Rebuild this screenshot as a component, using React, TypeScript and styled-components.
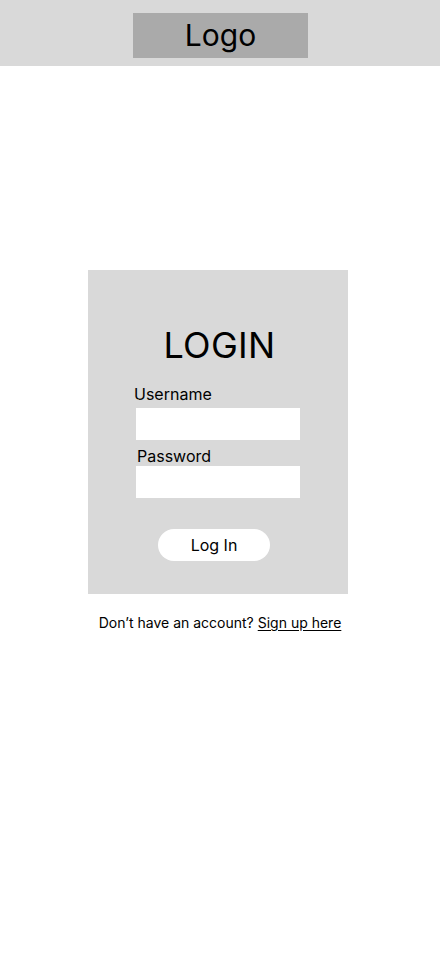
import React from "react";
import styled, { createGlobalStyle } from "styled-components";

const Global = createGlobalStyle`
  html, body { margin: 0; padding: 0; background: #ffffff; }
  body { font-family: Inter, "Noto Sans", sans-serif; color: #000; }
  * { box-sizing: border-box; }
`;

const Page = styled.div`
  display: flex;
  flex-direction: column;
  min-height: 956px;
  background: #ffffff;
`;

const Header = styled.header`
  height: 66px;
  background: #d9d9d9;
  display: flex;
  align-items: flex-start;
  justify-content: center;
  padding-top: 13px;
  padding-left: 1px;
`;

const LogoBox = styled.div`
  width: 175px;
  height: 45px;
  background: #aaaaaa;
  display: flex;
  align-items: center;
  justify-content: center;
  font-size: 30px;
  font-weight: 400;
  line-height: 1;
  padding-bottom: 1px;
`;

const Main = styled.main`
  display: flex;
  flex-direction: column;
  align-items: center;
  padding-top: 204px;
`;

const Card = styled.section`
  width: 260px;
  margin-right: 4px;
  background: #d9d9d9;
  display: flex;
  flex-direction: column;
  align-items: center;
  padding: 52px 0 33px;
`;

const Title = styled.h1`
  margin: 0 0 17px 3px;
  font-size: 36px;
  font-weight: 400;
  line-height: 46px;
  letter-spacing: 0.3px;
`;

const Form = styled.div`
  width: 164px;
  display: flex;
  flex-direction: column;
`;

const Label = styled.label<{ $shift?: number; $gap?: number }>`
  display: block;
  font-size: 16px;
  line-height: 19px;
  margin-left: ${(p) => p.$shift ?? 0}px;
  margin-bottom: ${(p) => p.$gap ?? 0}px;
`;

const Field = styled.div<{ $gap?: number }>`
  height: 32px;
  background: #ffffff;
  margin-bottom: ${(p) => p.$gap ?? 0}px;
`;

const Button = styled.button`
  margin-top: 31px;
  margin-right: 8px;
  width: 112px;
  height: 32px;
  border: none;
  border-radius: 16px;
  background: #ffffff;
  font-family: Inter, "Noto Sans", sans-serif;
  font-size: 16px;
  color: #000;
  padding: 0;
`;

const Footer = styled.p`
  margin: 20px 0 0;
  font-size: 14px;
  line-height: 17px;
`;

const SignUp = styled.a`
  color: #000;
  text-decoration: underline;
  text-underline-offset: 2px;
`;

export default function App() {
  return (
    <Page>
      <Global />
      <Header>
        <LogoBox>Logo</LogoBox>
      </Header>
      <Main>
        <Card>
          <Title>LOGIN</Title>
          <Form>
            <Label $shift={-2} $gap={4}>Username</Label>
            <Field $gap={7} />
            <Label $shift={1}>Password</Label>
            <Field />
          </Form>
          <Button>Log In</Button>
        </Card>
        <Footer>
          Don’t have an account? <SignUp>Sign up here</SignUp>
        </Footer>
      </Main>
    </Page>
  );
}
